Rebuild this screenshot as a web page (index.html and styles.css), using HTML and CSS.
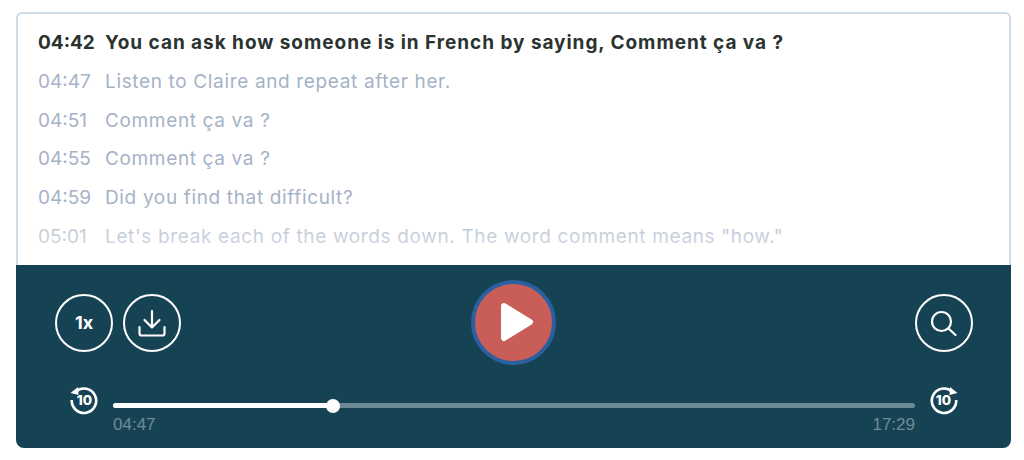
FILE: index.html
```html
<!DOCTYPE html>
<html lang="en">
<head>
<meta charset="utf-8">
<title>Transcript player</title>
<link rel="stylesheet" href="styles.css">
</head>
<body>
<main class="player">
  <section class="transcript">
    <div class="line active"><span class="time">04:42</span><span class="text">You can ask how someone is in French by saying, Comment ça va ?</span></div>
    <div class="line"><span class="time">04:47</span><span class="text">Listen to Claire and repeat after her.</span></div>
    <div class="line"><span class="time">04:51</span><span class="text">Comment ça va ?</span></div>
    <div class="line"><span class="time">04:55</span><span class="text">Comment ça va ?</span></div>
    <div class="line"><span class="time">04:59</span><span class="text">Did you find that difficult?</span></div>
    <div class="line"><span class="time">05:01</span><span class="text">Let's break each of the words down. The word comment means "how."</span></div>
  </section>
  <section class="controls">
    <div class="buttons">
      <div class="group">
        <div class="circle speed">1x</div>
        <div class="circle">
          <svg class="icon" width="28" height="28" viewBox="0 0 28 28"><path d="M14 2V18.5M6.5 11 14 18.5 21.5 11M1.5 18V24.5a2 2 0 0 0 2 2H24.5a2 2 0 0 0 2-2V18"/></svg>
        </div>
      </div>
      <div class="play">
        <svg class="play-icon" width="37" height="42" viewBox="0 0 37 42"><path d="M4 4 30 20 4 36Z"/></svg>
      </div>
      <div class="group end">
        <div class="circle">
          <svg class="icon" width="28" height="28" viewBox="0 0 28 28"><circle cx="11.5" cy="12.5" r="9.5"/><path d="M18.5 19.5 25.5 26"/></svg>
        </div>
      </div>
    </div>
    <div class="progress">
      <svg class="skip" width="30" height="30" viewBox="0 0 30 30"><path class="ring" d="M7 6.5A12.2 12.2 0 1 1 2.8 15"/><path class="head" d="M1.5 8 9 2 9.5 10Z"/><text x="15.5" y="19.9" class="skip-num">10</text></svg>
      <div class="track-wrap">
        <div class="track"><div class="fill" style="width:27.4%"><span class="knob"></span></div></div>
        <div class="times"><span>04:47</span><span>17:29</span></div>
      </div>
      <svg class="skip" width="30" height="30" viewBox="0 0 30 30"><path class="ring" d="M23 6.5A12.2 12.2 0 1 0 27.2 15"/><path class="head" d="M28.5 8 21 2 20.5 10Z"/><text x="14.5" y="19.9" class="skip-num">10</text></svg>
    </div>
  </section>
</main>
</body>
</html>
```
FILE: styles.css
```css
* { box-sizing: border-box; }
html, body { margin: 0; height: 100%; background: #fff; }
body { padding: 12px 13px 12px 16px; font-family: "Inter", "Liberation Sans", sans-serif; }
.player { width: 995px; display: flex; flex-direction: column; }
.transcript {
  position: relative;
  height: 253px;
  padding: 9.5px 20px 0;
  border: 2px solid #cfdbe6;
  border-bottom: 0;
  border-radius: 6px 6px 0 0;
  overflow: hidden;
  background: #fff;
}
.transcript::after {
  content: "";
  position: absolute;
  left: 0; right: 0; bottom: 0;
  height: 65px;
  background: linear-gradient(to bottom, rgba(255,255,255,0), rgba(255,255,255,.7));
}
.line {
  display: flex;
  height: 38.7px;
  align-items: center;
  font-size: 19px;
  color: #a6b2c7;
}
.time { width: 67px; flex: none; }
.text { white-space: nowrap; letter-spacing: .65px; }
.active { font-weight: 700; color: #2b3330; }
.active .text { letter-spacing: .95px; }
.controls {
  height: 183px;
  background: #164354;
  border-radius: 0 0 8px 8px;
  display: flex;
  flex-direction: column;
  padding-top: 15px;
}
.buttons {
  display: grid;
  grid-template-columns: 1fr auto 1fr;
  align-items: center;
  padding: 0 38px 0 39px;
}
.group { display: flex; gap: 10px; }
.end { justify-content: flex-end; }
.circle {
  width: 58px; height: 58px;
  border: 2px solid #fff;
  border-radius: 50%;
  display: flex; align-items: center; justify-content: center;
  color: #fff;
}
.speed { font-size: 18px; font-weight: 700; }
.icon { fill: none; stroke: #fff; stroke-width: 2.2; stroke-linecap: round; stroke-linejoin: round; }
.play {
  width: 85px; height: 85px;
  margin-right: 1px;
  border-radius: 50%;
  background: #c95e58;
  border: 4px solid #2a609f;
  display: flex; align-items: center; justify-content: center;
}
.play-icon { margin-left: 10px; fill: #fff; stroke: #fff; stroke-width: 6; stroke-linejoin: round; }
.progress {
  display: flex;
  align-items: flex-start;
  gap: 14px;
  padding: 20px 52px 0 53px;
}
.skip { flex: none; }
.ring { fill: none; stroke: #fff; stroke-width: 2.6; }
.head { fill: #fff; }
.skip-num { font-weight: 800; font-size: 13.5px; fill: #fff; text-anchor: middle; }
.track-wrap { flex: 1; padding-top: 18px; }
.track { height: 5px; background: #6c8a96; border-radius: 3px; }
.fill { position: relative; height: 100%; background: #fff; border-radius: 3px; }
.knob {
  position: absolute;
  right: -7px; top: -4.5px;
  width: 14px; height: 14px;
  background: #fff;
  border-radius: 50%;
}
.times {
  display: flex;
  justify-content: space-between;
  margin-top: 7px;
  font-family: "Liberation Sans", Arial, sans-serif;
  font-size: 17px;
  color: #6f8b97;
}
```
